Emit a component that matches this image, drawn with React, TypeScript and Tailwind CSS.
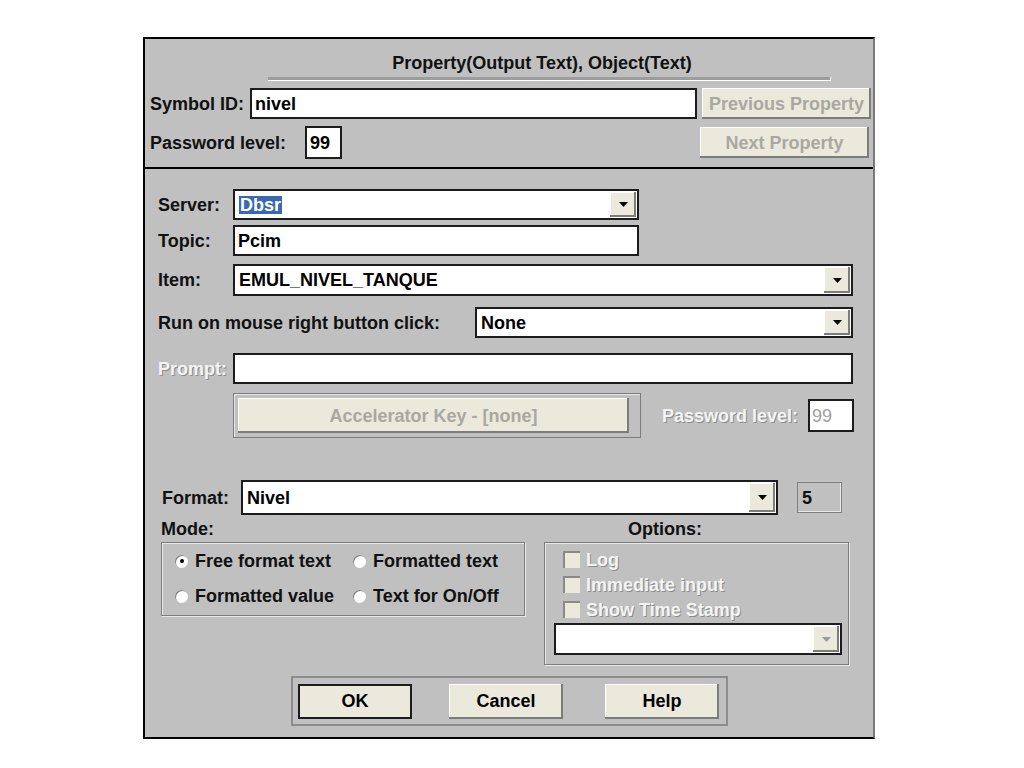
import React from "react";

const FACE = "bg-[#ebe8dc] shadow-[inset_-2px_-2px_0_#7c7c78,inset_1px_1px_0_#ffffff]";
const DIS = "text-[#f4f4f4] [text-shadow:1px_1px_0_#8c8c8c]";

const Arrow = ({ disabled }: { disabled?: boolean }) => (
  <div className={`w-[26px] h-full flex items-center justify-center ${FACE}`}>
    <svg width="9" height="5" viewBox="0 0 9 5">
      <path d="M0 0h9L4.5 5z" fill={disabled ? "#9a9a9a" : "#000"} />
    </svg>
  </div>
);

const Field = ({ w, h, children }: { w: string; h: string; children?: React.ReactNode }) => (
  <div className={`${w} ${h} bg-white border-2 border-[#1c1c1c] flex items-center px-[3px] text-black`}>
    {children}
  </div>
);

const Combo = ({ w, h, children, disabled }: { w: string; h: string; children?: React.ReactNode; disabled?: boolean }) => (
  <div className={`${w} ${h} bg-white border-2 border-[#1c1c1c] flex items-stretch p-[1px]`}>
    <div className="flex-1 flex items-center px-[3px] text-black">{children}</div>
    <Arrow disabled={disabled} />
  </div>
);

const Btn = ({ label, disabled, def }: { label: string; disabled?: boolean; def?: boolean }) => (
  <div
    className={`w-[114px] h-[35px] flex items-center justify-center ${FACE} ${
      def ? "outline-2 outline-[#1c1c1c] -outline-offset-2" : ""
    } ${disabled ? "text-[#a9a8a0]" : "text-black"}`}
  >
    {label}
  </div>
);

const Radio = ({ label, checked }: { label: string; checked?: boolean }) => (
  <div className="flex items-center h-[20px]">
    <div className="w-[13px] h-[13px] rounded-full bg-white shadow-[inset_1px_1px_0_#808080] flex items-center justify-center">
      {checked && <div className="w-[4px] h-[4px] rounded-full bg-black" />}
    </div>
    <span className="ml-[7px]">{label}</span>
  </div>
);

const Check = ({ label }: { label: string }) => (
  <div className="flex items-center h-[25px]">
    <div className="w-[17px] h-[17px] bg-[#ebe8dc] shadow-[inset_2px_2px_0_#8a8a84]" />
    <span className={`ml-[6px] ${DIS}`}>{label}</span>
  </div>
);

export default function App() {
  return (
    <div className="w-[1024px] h-[768px] bg-white font-['Liberation_Sans',Arial,sans-serif] text-[18px] font-bold leading-none text-[#111] overflow-hidden">
      <div className="ml-[143px] pt-[37px]">
        <div className="w-[732px] h-[702px] bg-[#c0c0c0] border-t-2 border-l-2 border-b-2 border-black border-r-2 border-r-[#7a7a7a] flex flex-col">
          {/* header */}
          <div className="h-[130px] flex flex-col pt-[14px] border-b-2 border-black">
            <div className="ml-[123px] w-[563px] pr-[15px] h-[20px] flex items-center justify-center">
              Property(Output Text), Object(Text)
            </div>
            <div className="ml-[123px] w-[563px] h-[4px] mt-[4px] bg-[#9c9c9c] border-b border-r border-white" />
            <div className="flex items-center mt-[6px] h-[33px] pl-[5px]">
              <span className="w-[100px]">Symbol ID:</span>
              <Field w="w-[447px]" h="h-[31px]">nivel</Field>
              <div className={`ml-[5px] w-[169px] h-[31px] flex items-center justify-center ${FACE} text-[#a9a8a0]`}>
                Previous Property
              </div>
            </div>
            <div className="flex items-center mt-[6px] h-[33px] pl-[5px]">
              <span className="w-[155px]">Password level:</span>
              <Field w="w-[37px]" h="h-[33px]">99</Field>
              <div className={`ml-[358px] w-[169px] h-[31px] flex items-center justify-center ${FACE} text-[#a9a8a0]`}>
                Next Property
              </div>
            </div>
          </div>

          {/* body */}
          <div className="flex flex-col pl-[13px] pt-[20px]">
            <div className="flex items-center h-[31px]">
              <span className="w-[75px]">Server:</span>
              <Combo w="w-[406px]" h="h-[31px]">
                <span className="bg-[#3a68b2] text-white px-[1px]">Dbsr</span>
              </Combo>
            </div>
            <div className="flex items-center h-[31px] mt-[5px]">
              <span className="w-[75px]">Topic:</span>
              <Field w="w-[406px]" h="h-[31px]">Pcim</Field>
            </div>
            <div className="flex items-center h-[32px] mt-[8px]">
              <span className="w-[75px]">Item:</span>
              <Combo w="w-[620px]" h="h-[32px]">EMUL_NIVEL_TANQUE</Combo>
            </div>
            <div className="flex items-center h-[31px] mt-[11px]">
              <span className="w-[317px]">Run on mouse right button click:</span>
              <Combo w="w-[378px]" h="h-[31px]">None</Combo>
            </div>
            <div className="flex items-center h-[31px] mt-[15px]">
              <span className={`w-[75px] ${DIS}`}>Prompt:</span>
              <Field w="w-[620px]" h="h-[31px]" />
            </div>
            <div className="flex items-center h-[45px] mt-[9px] pl-[75px]">
              <div className="w-[408px] h-[45px] border border-[#7c7c7c] shadow-[inset_1px_1px_0_#e8e8e8] p-[4px] pr-[11px]">
                <div className={`w-full h-full flex items-center justify-center ${FACE} text-[#a9a8a0]`}>
                  Accelerator Key - [none]
                </div>
              </div>
              <span className={`ml-[21px] ${DIS}`}>Password level:</span>
              <div className="ml-[10px] w-[46px] h-[33px] bg-white border-2 border-[#1c1c1c] flex items-center px-[2px] text-[#a0a0a0] font-normal">
                99
              </div>
            </div>
            <div className="flex items-center h-[35px] mt-[42px] pl-[4px]">
              <span className="w-[79px]">Format:</span>
              <Combo w="w-[537px]" h="h-[35px]">Nivel</Combo>
              <div className="ml-[19px] w-[45px] h-[31px] border border-[#808080] shadow-[inset_-1px_-1px_0_#e8e8e8] flex items-center px-[4px]">
                5
              </div>
            </div>

            <div className="flex pl-[3px]">
              <div className="flex flex-col w-[364px]">
                <div className="h-[27px] flex items-center">Mode:</div>
                <div className="h-[74px] border border-[#7c7c7c] shadow-[inset_1px_1px_0_#e8e8e8,1px_1px_0_#e8e8e8] grid grid-cols-[178px_1fr] gap-y-[15px] pl-[13px] pt-[8px] content-start">
                  <Radio label="Free format text" checked />
                  <Radio label="Formatted text" />
                  <Radio label="Formatted value" />
                  <Radio label="Text for On/Off" />
                </div>
              </div>
              <div className="flex flex-col w-[305px] ml-[19px]">
                <div className="h-[27px] flex items-center pl-[84px]">Options:</div>
                <div className="h-[123px] border border-[#7c7c7c] shadow-[inset_1px_1px_0_#e8e8e8,1px_1px_0_#e8e8e8] flex flex-col pt-[4px] pl-[18px]">
                  <Check label="Log" />
                  <Check label="Immediate input" />
                  <Check label="Show Time Stamp" />
                  <div className="-ml-[9px] mt-[1px]">
                    <Combo w="w-[288px]" h="h-[32px]" disabled />
                  </div>
                </div>
              </div>
            </div>

            <div className="ml-[133px] mt-[11px] w-[437px] h-[50px] border-2 border-[#8c8c8c] flex items-center pl-[5px]">
              <Btn label="OK" def />
              <div className="ml-[37px]">
                <Btn label="Cancel" />
              </div>
              <div className="ml-[42px]">
                <Btn label="Help" />
              </div>
            </div>
          </div>
        </div>
      </div>
    </div>
  );
}
